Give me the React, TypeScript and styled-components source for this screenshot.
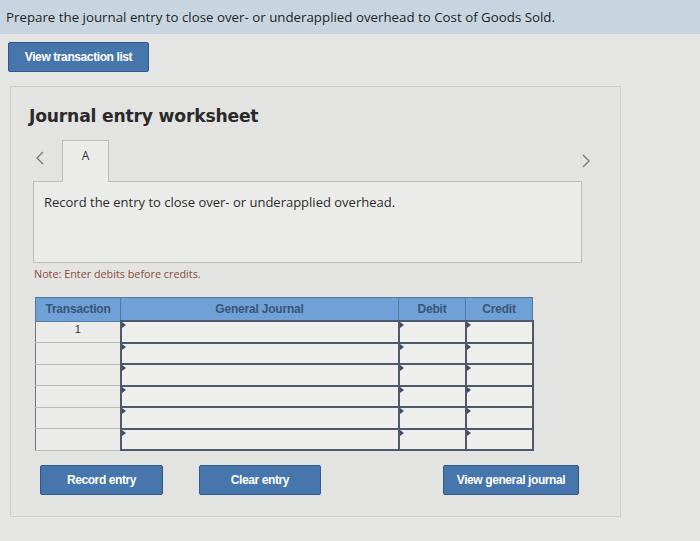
import styled, { createGlobalStyle } from "styled-components";

const GlobalStyle = createGlobalStyle`
  html, body {
    margin: 0;
    padding: 0;
    background: #e4e4e2;
  }
  body {
    font-family: "Open Sans", "DejaVu Sans", sans-serif;
    color: #2b2b2b;
  }
`;

const Page = styled.div`
  width: 700px;
  height: 541px;
  overflow: hidden;
  background: #e5e5e3;
`;

const TopBar = styled.div`
  height: 34px;
  display: flex;
  align-items: center;
  padding-left: 6px;
  background: #c8d5e0;
  font-size: 13.3px;
  color: #1f1f1f;
`;

const ButtonRow = styled.div`
  padding: 8px 0 0 8px;
`;

// blue action button, width differs per use
const ActionButton = styled.button<{ w: number }>`
  width: ${(p) => p.w}px;
  height: 30px;
  border: 1px solid #30598a;
  border-radius: 2px;
  background: #4676ac;
  color: #fff;
  font-family: "Liberation Sans", Arial, sans-serif;
  font-weight: bold;
  font-size: 12px;
  letter-spacing: -0.4px;
  cursor: pointer;
  padding: 0;
`;

const Panel = styled.div`
  margin: 14px 0 0 10px;
  width: 611px;
  height: 431px;
  border: 1px solid #cdcdcb;
  background: #e3e3e2;
  padding-top: 18px;
  box-sizing: border-box;
`;

const Title = styled.h2`
  margin: 0 0 0 18px;
  font-family: "DejaVu Sans", Verdana, sans-serif;
  font-weight: bold;
  font-size: 17.2px;
  line-height: 22px;
  color: #2a2a2a;
  letter-spacing: -0.2px;
`;

const TabRow = styled.div`
  margin: 12px 0 0 22px;
  width: 560px;
  height: 42px;
  display: flex;
  align-items: flex-end;
  position: relative;
  z-index: 1;
`;

const Chevron = styled.button<{ right?: boolean }>`
  background: none;
  border: none;
  padding: 0;
  width: 14px;
  height: 18px;
  align-self: center;
  margin-left: ${(p) => (p.right ? "auto" : "0")};
  margin-top: ${(p) => (p.right ? "2px" : "-4px")};
  display: flex;
  align-items: center;
  justify-content: center;
  cursor: pointer;
`;

const Tab = styled.div`
  margin-left: 15px;
  width: 47px;
  height: 42px;
  box-sizing: border-box;
  border: 1px solid #bcbcbc;
  border-bottom: none;
  background: #ebebea;
  font-size: 12px;
  color: #333;
  text-align: center;
  padding-top: 6px;
  margin-bottom: -1px;
`;

const ContentBox = styled.div`
  margin: 0 0 0 22px;
  width: 549px;
  height: 82px;
  box-sizing: border-box;
  border: 1px solid #bcbcbc;
  background: #ebebea;
  padding: 11px 0 0 10px;
  font-size: 13px;
  color: #2b2b2b;
`;

const Note = styled.div`
  margin: 4px 0 0 23px;
  font-size: 10.8px;
  line-height: 14px;
  color: #8a4a40;
`;

const Table = styled.table`
  margin: 16px 0 0 24px;
  width: 497px;
  border-collapse: collapse;
  table-layout: fixed;
  font-family: "Liberation Sans", Arial, sans-serif;
`;

const HeadCell = styled.th`
  height: 22px;
  padding: 0;
  background: #70a1d6;
  border: 1px solid #55789f;
  color: #3a5576;
  font-size: 12px;
  font-weight: bold;
  letter-spacing: -0.2px;
`;

const RowLabel = styled.td`
  height: 19.5px;
  padding: 0;
  background: #ebebea;
  border: 1px solid #b9b9b9;
  border-left: 1px solid #6b7788;
  text-align: center;
  font-size: 11px;
  color: #333;
  vertical-align: top;
  padding-top: 1px;
  box-sizing: border-box;
`;

// editable cell with the small marker in its corner
const InputCell = styled.td`
  height: 19.5px;
  padding: 0;
  background: #eeeeed;
  border: 2px solid #4d5a6b;
  position: relative;

  &::before {
    content: "";
    position: absolute;
    top: 0;
    left: 0;
    border-top: 3px solid transparent;
    border-bottom: 3px solid transparent;
    border-left: 4px solid #3b4e66;
  }
`;

const Footer = styled.div`
  margin: 14px 0 0 29px;
  width: 539px;
  display: flex;
  align-items: center;
`;

const ChevronIcon = ({ dir }: { dir: "left" | "right" }) => (
  <svg width="10" height="16" viewBox="0 0 10 16">
    <polyline
      points={dir === "left" ? "8,2 2,8 8,14" : "2,2 8,8 2,14"}
      fill="none"
      stroke="#7a7a7a"
      strokeWidth="1.4"
    />
  </svg>
);

const columns = [
  { label: "Transaction", width: 85 },
  { label: "General Journal", width: 278 },
  { label: "Debit", width: 67 },
  { label: "Credit", width: 67 },
];

const rows = [1, 2, 3, 4, 5, 6];

const App = () => {
  return (
    <Page>
      <GlobalStyle />
      <TopBar>
        Prepare the journal entry to close over- or underapplied overhead to Cost of Goods Sold.
      </TopBar>
      <ButtonRow>
        <ActionButton w={141}>View transaction list</ActionButton>
      </ButtonRow>
      <Panel>
        <Title>Journal entry worksheet</Title>
        <TabRow>
          <Chevron aria-label="previous">
            <ChevronIcon dir="left" />
          </Chevron>
          <Tab>A</Tab>
          <Chevron right aria-label="next">
            <ChevronIcon dir="right" />
          </Chevron>
        </TabRow>
        <ContentBox>Record the entry to close over- or underapplied overhead.</ContentBox>
        <Note>Note: Enter debits before credits.</Note>
        <Table>
          <colgroup>
            {columns.map((c) => (
              <col key={c.label} style={{ width: c.width }} />
            ))}
          </colgroup>
          <thead>
            <tr>
              {columns.map((c) => (
                <HeadCell key={c.label}>{c.label}</HeadCell>
              ))}
            </tr>
          </thead>
          <tbody>
            {rows.map((r) => (
              <tr key={r}>
                <RowLabel>{r === 1 ? "1" : ""}</RowLabel>
                <InputCell />
                <InputCell />
                <InputCell />
              </tr>
            ))}
          </tbody>
        </Table>
        <Footer>
          <ActionButton w={123}>Record entry</ActionButton>
          <ActionButton w={122} style={{ marginLeft: 36 }}>
            Clear entry
          </ActionButton>
          <ActionButton w={136} style={{ marginLeft: "auto" }}>
            View general journal
          </ActionButton>
        </Footer>
      </Panel>
    </Page>
  );
};

export default App;
